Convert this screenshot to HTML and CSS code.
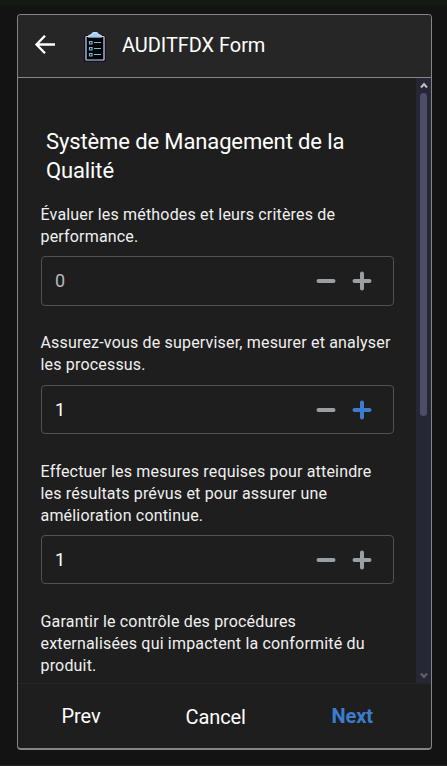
FILE: index.html
```html
<!DOCTYPE html>
<html lang="fr">
<head>
<meta charset="utf-8">
<title>AUDITFDX Form</title>
<link rel="stylesheet" href="styles.css">
</head>
<body>
<main class="card">
  <header class="header">
    <svg class="back" width="22" height="20" viewBox="0 0 22 20"><path d="M22 9.500H3.500M12 .700L3.500 9.500l8.500 8.800" fill="none" stroke="#fff" stroke-width="2.300"/></svg>
    <svg class="clip" width="22" height="32" viewBox="0 0 22 32">
      <rect x="1.500" y="5.500" width="19" height="24" rx="1" fill="#000" stroke="#111126" stroke-width="3"/>
      <rect x="2" y="5.500" width="18" height="23.500" rx=".5" fill="#000" stroke="#d2d2fa" stroke-width="1.200"/>
      <path d="M4 6.500V4.500L7 3l2-2h4l2 2 3 1.500v2z" fill="#c9d3f8"/>
      <path d="M6 5.500h10M9 3.500h4" stroke="#87d3f5" stroke-width="1.500"/>
      <path d="M5.500 10.500h2.500v2.500H5.500zM5.500 16.500h2.500v2.500H5.500zM5.500 22.500h2.500v2.500H5.500z" fill="none" stroke="#62c2e2" stroke-width="1.200"/>
      <path d="M10 11.500h7M10 17.500h7M10 23.500h7" stroke="#62c2e2" stroke-width="1.100"/>
    </svg>
    <h1 class="title">AUDITFDX Form</h1>
  </header>
  <div class="body">
    <div class="content">
      <h2 class="section">Système de Management de la<br>Qualité</h2>
      <div class="field">
        <label class="label">Évaluer les méthodes et leurs critères de<br>performance.</label>
        <div class="box first"><span class="value muted">0</span>
          <svg class="ctl" width="20" height="20" viewBox="0 0 20 20"><path d="M2.500 10h15"/></svg>
          <svg class="ctl" width="20" height="20" viewBox="0 0 20 20"><path d="M2.500 10h15M10 2.500v15"/></svg></div>
      </div>
      <div class="field">
        <label class="label">Assurez-vous de superviser, mesurer et analyser<br>les processus.</label>
        <div class="box"><span class="value">1</span>
          <svg class="ctl" width="20" height="20" viewBox="0 0 20 20"><path d="M2.500 10h15"/></svg>
          <svg class="ctl active" width="20" height="20" viewBox="0 0 20 20"><path d="M2.500 10h15M10 2.500v15"/></svg></div>
      </div>
      <div class="field">
        <label class="label">Effectuer les mesures requises pour atteindre<br>les résultats prévus et pour assurer une<br>amélioration continue.</label>
        <div class="box"><span class="value">1</span>
          <svg class="ctl" width="20" height="20" viewBox="0 0 20 20"><path d="M2.500 10h15"/></svg>
          <svg class="ctl" width="20" height="20" viewBox="0 0 20 20"><path d="M2.500 10h15M10 2.500v15"/></svg></div>
      </div>
      <div class="field">
        <label class="label">Garantir le contrôle des procédures<br>externalisées qui impactent la conformité du<br>produit.</label>
      </div>
    </div>
    <div class="scrollbar">
      <svg class="arrow" width="8" height="7" viewBox="0 0 8 7"><path d="M1 5.500l3-3.500 3 3.500" fill="none" stroke="#c0c0c0" stroke-width="2"/></svg>
      <div class="thumb"></div>
      <svg class="arrow down" width="8" height="7" viewBox="0 0 8 7"><path d="M1 1.500l3 3.500 3-3.500" fill="none" stroke="#646464" stroke-width="2"/></svg>
    </div>
  </div>
  <footer class="footer"><span class="btn prev">Prev</span><span class="btn cancel">Cancel</span><span class="btn next">Next</span></footer>
</main>
</body>
</html>
```
FILE: styles.css
```css
* { box-sizing: border-box; }
body { margin: 0; height: 766px; padding: 14px 15px 16px 17px; overflow: hidden; background: linear-gradient(#121a12 0 5px, #131313 6px 765px, #262424 765px); font-family: Roboto, sans-serif; color: #fff; }
.card { display: flex; flex-direction: column; width: 415px; height: 736px; border: 1px solid #858585; border-bottom-width: 2px; border-radius: 4px; background: #1e1e1e; overflow: hidden; }
.header { display: flex; align-items: center; flex: none; height: 63px; padding-bottom: 2px; border-bottom: 1px solid #858585; background: #262626; }
.back { margin-left: 15px; }
.clip { margin: 4px 0 0 29px; }
.title { margin: 0 0 0 16px; font-size: 20px; font-weight: 400; line-height: 24px; letter-spacing: -0.06px; white-space: nowrap; }
.body { display: flex; flex: none; height: 605px; }
.content { width: 398px; padding: 49px 22px 0 23px; overflow: hidden; white-space: nowrap; }
.section { margin: 0 0 19px 5px; font-size: 22px; font-weight: 400; line-height: 29px; letter-spacing: -0.12px; }
.field { margin-bottom: 26px; }
.label { display: block; margin-left: -0.5px; font-size: 16px; font-weight: 400; line-height: 22px; letter-spacing: 0.18px; color: #f0f0f0; }
.field:nth-of-type(n+3) .label { padding-top: 1px; margin-bottom: -1px; }
.box { display: flex; align-items: center; height: 49px; margin-top: 9px; padding: 0 21px 0 13px; border: 1px solid #515151; border-radius: 4px; }
.box.first { height: 50px; margin-top: 8px; padding-bottom: 1px; }
.value { flex: 1; font-size: 18px; }
.muted { color: #b9b9b9; }
.ctl { margin-left: 16px; fill: none; stroke: #9a9fa3; stroke-width: 4; stroke-linecap: round; }
.active { stroke: #3b7dcc; }
.scrollbar { display: flex; flex-direction: column; align-items: center; width: 15px; background: #262735; }
.arrow { flex: none; margin-top: 4px; }
.thumb { width: 7px; height: 323px; margin-top: 4px; border-radius: 4px; background: #4e4d68; }
.down { margin: auto 0 4px; }
.footer { display: flex; align-items: center; flex: 1; border-top: 1px solid #252525; font-size: 20px; line-height: 24px; letter-spacing: -0.08px; }
.prev { margin-left: 43.5px; width: 124px; }
.cancel { width: 146px; padding-top: 1px; }
.next { color: #3b7dcc; font-weight: 700; }
```
